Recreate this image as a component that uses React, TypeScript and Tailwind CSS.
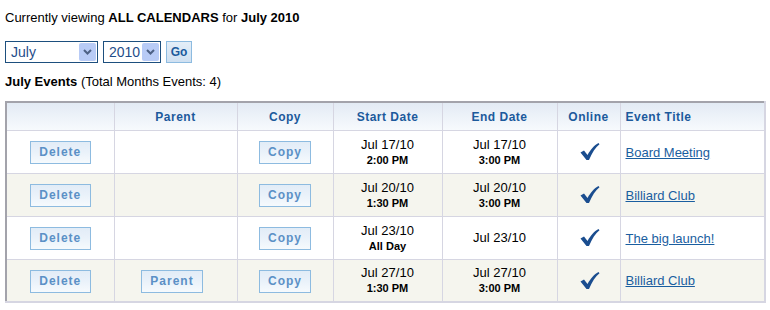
import React from 'react';

type Row = {
  start: string;
  startSub: string;
  end: string;
  endSub?: string;
  title: string;
  parent?: boolean;
};

const rows: Row[] = [
  { start: 'Jul 17/10', startSub: '2:00 PM', end: 'Jul 17/10', endSub: '3:00 PM', title: 'Board Meeting' },
  { start: 'Jul 20/10', startSub: '1:30 PM', end: 'Jul 20/10', endSub: '3:00 PM', title: 'Billiard Club' },
  { start: 'Jul 23/10', startSub: 'All Day', end: 'Jul 23/10', title: 'The big launch!' },
  { start: 'Jul 27/10', startSub: '1:30 PM', end: 'Jul 27/10', endSub: '3:00 PM', title: 'Billiard Club', parent: true },
];

function Btn({ label, w }: { label: string; w: string }) {
  return (
    <button
      className={
        'h-[23px] border border-[#8dbbe0] bg-gradient-to-b from-[#e2ecf7] via-[#eaf2fa] to-[#f6fafd] text-[12px] font-bold tracking-[1px] text-[#5b90c6] ' +
        w
      }
    >
      {label}
    </button>
  );
}

function FakeSelect({ value, w }: { value: string; w: string }) {
  return (
    <div className={'flex h-[22px] items-center justify-between border border-[#1d4f7e] bg-white pl-[5px] pr-[1px] ' + w}>
      <span className="text-[14px] text-[#1f4d8a]">{value}</span>
      <span className="flex h-[18px] w-[17px] items-center justify-center rounded-[2px] bg-[#b8cbf6]">
        <svg width="9" height="6" viewBox="0 0 9 6">
          <path d="M1 1 L4.5 4.5 L8 1" stroke="#4d6185" strokeWidth="2" fill="none" />
        </svg>
      </span>
    </div>
  );
}

function Check() {
  return (
    <svg width="22" height="19" viewBox="0 0 22 19" className="mx-auto">
      <path d="M1.5 10.5 L5 8.5 L8.5 13 C12 7 15 3.5 19.5 1 L20.5 2.2 C16.5 5.5 13 10.5 10 18 L7.5 18 Z" fill="#1a4d8f" />
    </svg>
  );
}

export default function App() {
  const th = 'h-[28px] border-l border-[#d6d6e2] pt-[2px] text-[12px] font-bold tracking-[0.5px] text-[#1c5a9c]';
  const td = 'border-l border-t border-[#d6d6e2] text-center align-middle';

  return (
    <div className="w-[770px] h-[310px] bg-white pl-[5px] pt-[10px] text-black" style={{ fontFamily: '"Liberation Sans", Arial, sans-serif' }}>
      <p className="text-[13px] leading-[16px]">
        Currently viewing <b>ALL CALENDARS</b> for <b>July 2010</b>
      </p>

      <div className="mt-[15px] flex items-center gap-[5px]">
        <FakeSelect value="July" w="w-[93px]" />
        <FakeSelect value="2010" w="w-[58px]" />
        <button className="h-[22px] w-[26px] border border-[#8dbbe0] bg-gradient-to-b from-[#e4eef8] to-[#cfe0f1] text-[12px] font-bold text-[#1c5a9c]">
          Go
        </button>
      </div>

      <p className="mt-[11px] text-[13px] leading-[16px]">
        <b>July Events</b> (Total Months Events: 4)
      </p>

      <table className="mt-[11px] w-[761px] table-fixed border-collapse border-t-2 border-l-2 border-r-2 border-b-2 border-t-[#a3a3ab] border-l-[#a3a3ab] border-r-[#d6d6e2] border-b-[#d6d6e2]">
        <colgroup>
          <col className="w-[108px]" />
          <col className="w-[123px]" />
          <col className="w-[96px]" />
          <col className="w-[109px]" />
          <col className="w-[115px]" />
          <col className="w-[63px]" />
          <col />
        </colgroup>
        <thead>
          <tr className="bg-gradient-to-b from-[#e2eaf4] to-[#f7fafd]">
            <th className="h-[28px]"></th>
            <th className={th}>Parent</th>
            <th className={th}>Copy</th>
            <th className={th}>Start Date</th>
            <th className={th}>End Date</th>
            <th className={th}>Online</th>
            <th className={th + ' pl-[5px] text-left'}>Event Title</th>
          </tr>
        </thead>
        <tbody>
          {rows.map((r, i) => (
            <tr key={i} className={'h-[43px] ' + (i % 2 === 1 ? 'bg-[#f5f5ee]' : 'bg-white')}>
              <td className="border-t border-[#d6d6e2] text-center align-middle">
                <Btn label="Delete" w="w-[61px]" />
              </td>
              <td className={td + ' pr-[7px]'}>{r.parent && <Btn label="Parent" w="w-[62px]" />}</td>
              <td className={td}>
                <Btn label="Copy" w="w-[52px]" />
              </td>
              <td className={td}>
                <div className="text-[13px] leading-[16px]">{r.start}</div>
                <div className="text-[11px] font-bold leading-[14px]">{r.startSub}</div>
              </td>
              <td className={td}>
                <div className="text-[13px] leading-[16px]">{r.end}</div>
                {r.endSub && <div className="text-[11px] font-bold leading-[14px]">{r.endSub}</div>}
              </td>
              <td className={td + ' pl-[3px]'}>
                <Check />
              </td>
              <td className="border-l border-t border-[#d6d6e2] pl-[5px] text-left align-middle">
                <a href="#" className="text-[13px] text-[#1a5ea0] underline">
                  {r.title}
                </a>
              </td>
            </tr>
          ))}
        </tbody>
      </table>
    </div>
  );
}
